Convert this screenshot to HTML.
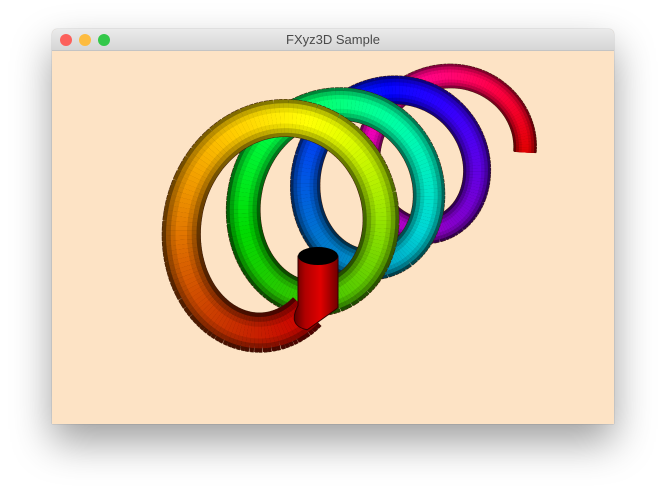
<!DOCTYPE html>
<html><head><meta charset="utf-8"><style>
html,body{margin:0;padding:0;background:#fff;width:667px;height:500px;overflow:hidden}
.win{position:absolute;left:52px;top:29px;width:562px;height:395px;box-shadow:0 18px 40px rgba(0,0,0,0.38),0 0 1px rgba(0,0,0,0.4);border-radius:5px 5px 0 0;overflow:hidden;background:#fde3c5}
.tb{height:21px;background:linear-gradient(#ebebeb,#d6d6d6);border-bottom:1px solid #c4c4c4;position:relative;font:13px "Liberation Sans",sans-serif;color:#4a4a4a;text-align:center;line-height:21px}
.d{position:absolute;top:5px;width:12px;height:12px;border-radius:50%}
svg{position:absolute;left:0;top:0}
</style></head><body>
<div class="win"><div class="tb"><span class="d" style="left:8px;background:#fc605b"></span><span class="d" style="left:27px;background:#fdbc40"></span><span class="d" style="left:46px;background:#34c84a"></span>FXyz3D Sample</div></div>
<svg id="s" width="667" height="500" xmlns="http://www.w3.org/2000/svg"></svg>
<script>
var s=document.getElementById('s'),out='';
out+='<defs><linearGradient id="rg" x1="0" x2="1" y1="0" y2="0"><stop offset="0" stop-color="#5a0000"/><stop offset="0.25" stop-color="#b00000"/><stop offset="0.6" stop-color="#e00000"/><stop offset="1" stop-color="#700000"/></linearGradient></defs>';
var a0=50,a1=1452,N=560,pts=[];
for(var i=0;i<=N;i++){var a=a0+(a1-a0)*i/N,t=(a-180)/360-0.25;
var cx=283+55*t,cy=216.75-24*t,rx=85.7-7*t,ry=98.75-10*t,r=a*Math.PI/180;
pts.push([cx+rx*Math.cos(r),cy+ry*Math.sin(r),a,19-2.2*(t+0.25)]);}
for(var i=N-1;i>=0;i--){var p=pts[i],q=pts[i+1];
var dx=q[0]-p[0],dy=q[1]-p[1],L=Math.hypot(dx,dy)||1;
var ex=q[0]+dx/L*0.8,ey=q[1]+dy/L*0.8;
var hue=((p[2]-a0)/(a1-a0))*360;
var w=p[3]*2;
var sh=Math.sin(p[2]*Math.PI/180);var light=44+(-sh)*6;
var seg='M'+p[0].toFixed(1)+' '+p[1].toFixed(1)+'L'+q[0].toFixed(1)+' '+q[1].toFixed(1);
var seg2='M'+p[0].toFixed(1)+' '+p[1].toFixed(1)+'L'+ex.toFixed(1)+' '+ey.toFixed(1);
out+='<path d="'+seg+'" stroke="#3a1a08" stroke-width="'+(w+1)+'" fill="none"/>';
out+='<path d="'+seg2+'" stroke="hsl('+hue+',100%,'+(light-24)+'%)" stroke-width="'+w+'" fill="none"/>';
out+='<path d="'+seg2+'" stroke="hsl('+hue+',100%,'+(light-12)+'%)" stroke-width="'+(w*0.8)+'" fill="none"/>';
out+='<path d="'+seg2+'" stroke="hsl('+hue+',100%,'+(light-4)+'%)" stroke-width="'+(w*0.55)+'" fill="none"/>';
out+='<path d="'+seg2+'" stroke="hsl('+hue+',100%,'+(light+1)+'%)" stroke-width="'+(w*0.3)+'" fill="none"/>';}
var p0=pts[0];
out+='<path d="M298 256 L298 '+(p0[1]-6)+' Q'+(p0[0]-20)+' '+(p0[1]+14)+' '+(p0[0])+' '+(p0[1]+18)+' L338 '+(p0[1]-4)+' L338 256 Z" fill="url(#rg)" stroke="#300" stroke-width="1"/>';
out+='<ellipse cx="318" cy="256" rx="20" ry="9" fill="#000"/>';
s.innerHTML=out;
</script>
</body></html>
